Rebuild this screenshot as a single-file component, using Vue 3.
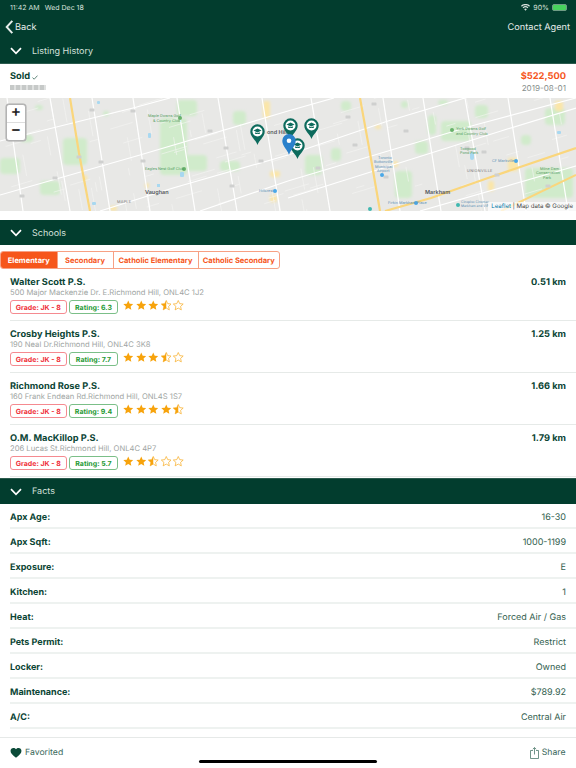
<script setup>
const schools = [
  { name: 'Walter Scott P.S.', addr: '500 Major Mackenzie Dr. E.Richmond Hill, ONL4C 1J2', rating: '6.3', km: '0.51 km', stars: 3.5 },
  { name: 'Crosby Heights P.S.', addr: '190 Neal Dr.Richmond Hill, ONL4C 3K8', rating: '7.7', km: '1.25 km', stars: 3.5 },
  { name: 'Richmond Rose P.S.', addr: '160 Frank Endean Rd.Richmond Hill, ONL4S 1S7', rating: '9.4', km: '1.66 km', stars: 4.5 },
  { name: 'O.M. MacKillop P.S.', addr: '206 Lucas St.Richmond Hill, ONL4C 4P7', rating: '5.7', km: '1.79 km', stars: 2.5 }
]
const facts = [
  ['Apx Age:', '16-30'], ['Apx Sqft:', '1000-1199'], ['Exposure:', 'E'], ['Kitchen:', '1'],
  ['Heat:', 'Forced Air / Gas'], ['Pets Permit:', 'Restrict'], ['Locker:', 'Owned'],
  ['Maintenance:', '$789.92'], ['A/C:', 'Central Air']
]
const tabs = ['Elementary', 'Secondary', 'Catholic Elementary', 'Catholic Secondary']
const starPath = 'M6.5 .6 8.3 4.5 12.6 5 9.4 7.9 10.3 12.2 6.5 10 2.7 12.2 3.6 7.9 .4 5 4.7 4.5Z'
const kind = (s, i) => (s >= i ? 'full' : s >= i - 0.5 ? 'half' : 'empty')

const roads = [
  [7, 0, 23, 113], [50, 0, 70, 113], [92, 0, 110, 113], [133, 0, 150, 113], [177, 0, 195, 113],
  [218, 0, 237, 113], [262, 0, 280, 113], [311, 0, 330, 113], [383, 0, 400, 113], [423, 0, 441, 113],
  [465, 0, 485, 113], [508, 0, 526, 113], [550, 0, 568, 113],
  [0, 97, 140, 57], [140, 57, 288, 13], [288, 13, 334, 0], [0, 43, 133, 10], [133, 10, 170, 0],
  [173, 90, 288, 57], [288, 57, 388, 23], [388, 23, 465, 0], [288, 100, 501, 33], [501, 33, 576, 10],
  [200, 113, 288, 83], [288, 83, 388, 53], [388, 53, 475, 27], [475, 27, 576, 0], [420, 113, 576, 68], [100, 113, 173, 90]
]
// thin residential streets, laid out with a small fixed pseudo-random sequence
const minor = []
let seed = 17
const rnd = () => ((seed = (seed * 137 + 71) % 1009) / 1009)
for (let i = 0; i < 120; i++) {
  const x = rnd() * 576, y = rnd() * 113, l = 6 + rnd() * 20
  if (rnd() > 0.5) minor.push([x, y, x + l, y - l * 0.3])
  else minor.push([x, y, x + l * 0.18, y + l])
}
const parks = [
  [35, 7, 8, 5], [103, 13, 6, 5], [160, 20, 27, 57], [177, 2, 20, 16], [185, 57, 22, 16], [63, 40, 24, 27],
  [0, 60, 20, 16], [40, 83, 20, 14], [20, 37, 13, 7], [220, 63, 20, 10], [233, 13, 13, 14], [341, 3, 10, 10],
  [401, 3, 7, 7], [428, 17, 8, 20], [441, 23, 30, 20], [475, 7, 13, 13], [521, 37, 10, 10], [525, 70, 48, 30],
  [395, 73, 17, 27], [331, 50, 10, 13], [305, 57, 17, 20], [415, 43, 13, 13], [545, 10, 20, 17], [438, 2, 10, 5]
]
const cream = [
  [263, 3, 7, 17], [270, 73, 10, 6], [270, 97, 7, 7], [83, 77, 4, 6], [145, 85, 4, 5], [110, 108, 7, 5],
  [393, 63, 5, 6], [488, 83, 6, 10], [508, 60, 10, 13], [555, 3, 8, 10], [375, 27, 6, 4]
]
const shields = [[92, 12], [133, 13], [79, 59], [143, 63], [101, 64], [55, 80], [22, 98], [210, 33], [226, 50], [261, 63], [232, 88], [374, 6], [406, 33], [348, 19], [386, 79], [355, 47], [467, 50], [484, 54], [497, 77], [318, 70], [548, 88]]
const pins = [[250, 26], [283, 20], [304, 20], [290, 40]]
const dots = [
  [180, 20, 'g'], [184, 71, 'g'], [452, 32, 'g'], [275, 93, 'b'], [382, 77, 'b'],
  [516, 63, 'b'], [416, 105, 'b'], [458, 107, 't'], [370, 111, 't']
]
const labels = [
  { t: 'Maple Downs Golf', x: 148, y: 16, c: 'green' }, { t: '& Country Club', x: 153, y: 21, c: 'green' },
  { t: 'Eagles Nest Golf Club', x: 145, y: 69, c: 'green' }, { t: 'Vaughan', x: 145, y: 92, c: 'city' },
  { t: 'MAPLE', x: 117, y: 102, c: 'sm' }, { t: 'Hillcrest', x: 259, y: 91, c: 'blue' },
  { t: 'York Downs Golf', x: 456, y: 29, c: 'green' }, { t: 'and Country Club', x: 456, y: 33.500, c: 'green' },
  { t: 'Toogood', x: 460, y: 48.500, c: 'green' }, { t: 'Pond Park', x: 460, y: 53, c: 'green' },
  { t: 'UNIONVILLE', x: 467, y: 71, c: 'sm' }, { t: 'CF Markville', x: 492, y: 61, c: 'blue' },
  { t: 'Milne Dam', x: 540, y: 68.500, c: 'green' }, { t: 'Conservation', x: 536, y: 73, c: 'green' }, { t: 'Park', x: 543, y: 77.500, c: 'green' },
  { t: 'Toronto', x: 378, y: 57.500, c: 'blue' }, { t: 'Buttonville', x: 374, y: 62, c: 'blue' },
  { t: 'Municipal', x: 375, y: 66.500, c: 'blue' }, { t: 'Airport', x: 377, y: 71, c: 'blue' },
  { t: 'Markham', x: 425, y: 92, c: 'city' }, { t: 'Firkin Markham Place', x: 388, y: 103, c: 'blue' },
  { t: 'Cineplex Cinemas', x: 461, y: 101.500, c: 'blue tiny' }, { t: 'Markham and VIP', x: 461, y: 106, c: 'blue tiny' },
  { t: 'ond Hill', x: 267, y: 32, c: 'city' }
]
</script>

<template>
  <div class="page">
    <header class="topbar">
      <div class="status">
        <span class="status-left"><span>11:42 AM</span><span>Wed Dec 18</span></span>
        <span class="status-right">
          <svg width="9" height="7" viewBox="0 0 13 10"><path d="M6.500 9.600 4.600 7.400a2.800 2.800 0 0 1 3.800 0ZM3.500 6.200 2.300 4.900a6 6 0 0 1 8.400 0L9.500 6.200a4.400 4.400 0 0 0-6 0ZM1.200 3.800 0 2.500a9.200 9.200 0 0 1 13 0l-1.200 1.300a7.600 7.600 0 0 0-10.600 0Z" fill="#d7e0dc"/></svg>
          <span>90%</span>
          <span class="battery"></span>
        </span>
      </div>
      <div class="nav">
        <span class="back">
          <svg width="9" height="14" viewBox="0 0 9 15"><path d="M7.500 1 1.500 7.500l6 6.500" fill="none" stroke="#e6ecea" stroke-width="2.100"/></svg>
          Back
        </span>
        <span>Contact Agent</span>
      </div>
      <div class="sect sect-first">
        <svg class="chev" width="12" height="8" viewBox="0 0 12 8"><path d="M1 1.200 6 6.300l5-5.100" fill="none" stroke="#fff" stroke-width="1.700"/></svg>
        <span>Listing History</span>
      </div>
    </header>

    <section class="sold">
      <div>
        <div class="sold-title">Sold <svg width="6" height="5" viewBox="0 0 6 5"><path d="M.5 2.600 2.200 4.200 5.500.6" fill="none" stroke="#3c6a5c" stroke-width=".8"/></svg></div>
        <div class="redacted"></div>
      </div>
      <div class="sold-right">
        <div class="price">$522,500</div>
        <div class="date">2019-08-01</div>
      </div>
    </section>

    <section class="map">
      <svg class="map-svg" width="576" height="113" viewBox="0 0 576 113">
        <defs><filter id="soft"><feGaussianBlur stdDeviation="1.800"/></filter></defs>
        <rect width="576" height="113" fill="#e8e8e6"/>
        <g filter="url(#soft)">
          <rect v-for="(p, i) in parks" :key="'p' + i" :x="p[0]" :y="p[1]" :width="p[2]" :height="p[3]" rx="4" fill="#d0ebcb"/>
          <rect v-for="(p, i) in cream" :key="'c' + i" :x="p[0]" :y="p[1]" :width="p[2]" :height="p[3]" rx="2" fill="#fbe6a8"/>
        </g>
        <g stroke="#f5f5f4" stroke-width=".6" fill="none">
          <line v-for="(r, i) in minor" :key="'m' + i" :x1="r[0]" :y1="r[1]" :x2="r[2]" :y2="r[3]"/>
        </g>
        <g stroke="#fff" stroke-width="1.200" fill="none">
          <line v-for="(r, i) in roads" :key="'r' + i" :x1="r[0]" :y1="r[1]" :x2="r[2]" :y2="r[3]"/>
        </g>
        <g stroke="#fad67c" stroke-width="2.200" fill="none">
          <path d="M70 0 79 55 90 113"/>
          <path d="M360 0 370 55 380 113"/>
          <path d="M385 113 431 100 488 80 576 50"/>
          <path d="M501 113 576 77" stroke-width="2"/>
        </g>
        <rect v-for="(s, i) in shields" :key="'s' + i" :x="s[0] - 2.500" :y="s[1] - 1.500" width="5" height="3" rx=".6" fill="#cfd0cf"/>
        <g fill="#a8d8f0">
          <rect x="97" y="3" width="3" height="3" rx="1"/><rect x="148" y="35" width="3" height="5" rx="1"/>
          <rect x="180" y="74" width="4" height="5" rx="1"/><rect x="92" y="104" width="4" height="3" rx="1"/>
          <rect x="470" y="54" width="4" height="8" rx="2"/><rect x="557" y="33" width="4" height="3" rx="1"/>
          <rect x="157" y="86" width="3" height="3"/>
        </g>
        <circle v-for="(d, i) in dots" :key="'d' + i" :cx="d[0]" :cy="d[1]" r="2" :fill="d[2] === 'g' ? '#68b26a' : d[2] === 'b' ? '#4aa8e8' : '#3fb8b0'"/>
      </svg>
      <span v-for="l in labels" :key="l.t" class="mlabel" :class="l.c" :style="{ left: l.x + 'px', top: l.y + 'px' }">{{ l.t }}</span>

      <svg v-for="(p, i) in pins" :key="'pin' + i" class="pin" :style="{ left: p[0] + 'px', top: p[1] + 'px' }" width="15" height="21" viewBox="0 0 15 21">
        <path d="M7.500 21C6 16 .3 13 .3 7.500a7.200 7.200 0 0 1 14.400 0C14.700 13 9 16 7.500 21Z" fill="#0d6b5d"/>
        <circle cx="7.500" cy="7.500" r="5" fill="#fff"/>
        <path d="M7.500 4.600 11.500 6.600 7.500 8.600 3.500 6.600ZM5.200 8.200 7.500 9.300 9.800 8.200V10H5.200Z" fill="#0d6b5d"/>
      </svg>
      <svg class="pin" style="left:282px;top:36px" width="14" height="21" viewBox="0 0 14 21">
        <path d="M7 21C5.500 15.500.3 12.500.3 6.800a6.700 6.700 0 0 1 13.400 0C13.700 12.500 8.500 15.500 7 21Z" fill="#2a81cb"/>
        <circle cx="7" cy="6.800" r="2.300" fill="#fff"/>
      </svg>

      <div class="zoom">
        <div class="zoom-btn">+</div>
        <div class="zoom-btn">−</div>
      </div>
      <div class="attrib"><span class="leaflet">Leaflet</span> | Map data © Google</div>
    </section>

    <div class="sect sect-bar schools-bar">
      <svg class="chev" width="12" height="8" viewBox="0 0 12 8"><path d="M1 1.200 6 6.300l5-5.100" fill="none" stroke="#fff" stroke-width="1.700"/></svg>
      <span>Schools</span>
    </div>

    <div class="tabs">
      <span v-for="(t, i) in tabs" :key="t" class="tab" :class="{ active: i === 0 }">{{ t }}</span>
    </div>

    <div class="school" v-for="s in schools" :key="s.name">
      <div class="school-top">
        <span class="school-name">{{ s.name }}</span>
        <span class="km">{{ s.km }}</span>
      </div>
      <div class="addr">{{ s.addr }}</div>
      <div class="badges">
        <span class="badge red">Grade: JK - 8</span>
        <span class="badge green">Rating: {{ s.rating }}</span>
        <span class="stars">
          <svg v-for="i in 5" :key="i" width="10.500" height="10.500" viewBox="0 0 13 13">
            <path v-if="kind(s.stars, i) === 'full'" :d="starPath" fill="#f7a30c"/>
            <template v-else>
              <path :d="starPath" fill="none" stroke="#f7a30c" stroke-width=".8"/>
              <path v-if="kind(s.stars, i) === 'half'" d="M6.500 .6V10L2.700 12.200 3.600 7.900 .4 5 4.700 4.500Z" fill="#f7a30c"/>
            </template>
          </svg>
        </span>
      </div>
    </div>

    <div class="sect sect-bar facts-bar">
      <svg class="chev" width="12" height="8" viewBox="0 0 12 8"><path d="M1 1.200 6 6.300l5-5.100" fill="none" stroke="#fff" stroke-width="1.700"/></svg>
      <span>Facts</span>
    </div>

    <div class="fact" v-for="f in facts" :key="f[0]">
      <span class="fact-key">{{ f[0] }}</span>
      <span class="fact-val">{{ f[1] }}</span>
    </div>

    <footer class="footer">
      <span class="foot-item">
        <svg width="12" height="10" viewBox="0 0 12 11"><path d="M6 10.800C2.500 8 0 6 0 3.300 0 1.400 1.400 0 3.200 0 4.300 0 5.400.6 6 1.500 6.600.6 7.700 0 8.800 0 10.600 0 12 1.400 12 3.300 12 6 9.500 8 6 10.800Z" fill="#0b4a38"/></svg>
        Favorited
      </span>
      <span class="foot-item">
        <svg width="9" height="12" viewBox="0 0 9 12"><path d="M3 3.500H.5v8h8v-8H6M4.500 7.500V.7M2.800 2.200 4.500.6l1.700 1.600" fill="none" stroke="#4d7a6c" stroke-width=".8"/></svg>
        Share
      </span>
      <div class="home"></div>
    </footer>
  </div>
</template>

<style scoped>
.page { width: 576px; height: 768px; overflow: hidden; position: relative; background: #fff; font-family: Inter, "Liberation Sans", sans-serif; color: #0b4535; text-rendering: geometricPrecision; }
.topbar { background: #023d2e; height: 64px; color: #e6ecea; border-bottom: 1px solid #2c5b4e; box-sizing: border-box; }
.status { height: 15px; display: flex; justify-content: space-between; align-items: center; padding: 0 9px 0 10px; font-size: 7px; color: #d7e0dc; }
.status-left { display: flex; gap: 5px; }
.status-right { display: flex; align-items: center; gap: 3px; }
.battery { width: 13px; height: 5px; background: #47d35d; border: 1px solid #6f9c85; border-radius: 2px; display: block; }
.nav { height: 24px; display: flex; justify-content: space-between; align-items: center; padding: 0 6px 0 5px; font-size: 9.200px; }
.back { display: flex; align-items: center; gap: 1px; }
.sect { display: flex; align-items: center; font-size: 9px; color: #d5e0dc; box-sizing: border-box; }
.sect-first { height: 24px; padding-left: 10px; }
.chev { margin-right: 10px; }
.sect-bar { background: #023d2e; height: 25px; padding: 1px 0 0 10px; }
.sold { height: 34px; display: flex; justify-content: space-between; padding: 7px 10px 0 10px; box-sizing: border-box; }
.sold-title { font-size: 9.300px; font-weight: 700; line-height: 12px; display: flex; gap: 2px; align-items: center; }
.redacted { width: 36px; height: 5px; margin-top: 2px; background: repeating-linear-gradient(90deg, #c6c9c8 0 4px, #dfe1e0 4px 6px); filter: blur(.7px); }
.sold-right { text-align: right; }
.price { font-size: 9.300px; font-weight: 700; color: #f6561b; line-height: 12px; }
.date { font-size: 8.100px; color: #868e8b; line-height: 10px; }
.map { height: 113px; position: relative; overflow: hidden; margin-bottom: 9px; }
.map-svg { display: block; }
.pin { position: absolute; }
.mlabel { position: absolute; font-size: 3.800px; line-height: 4px; white-space: nowrap; }
.mlabel.green { color: #4f9a5c; }
.mlabel.blue { color: #5a8fb5; }
.mlabel.tiny { font-size: 3.300px; }
.mlabel.city { color: #55595c; font-size: 5.500px; line-height: 6px; font-weight: 600; }
.mlabel.sm { color: #777; letter-spacing: .3px; }
.zoom { position: absolute; left: 6px; top: 6px; width: 18px; border: 1px solid #b3b3b3; border-radius: 3px; background: #fff; overflow: hidden; box-shadow: 0 0 0 .5px #aaa; }
.zoom-btn { height: 17px; font: 700 15px/16px "Liberation Sans", sans-serif; color: #222; text-align: center; border-bottom: 1px solid #ddd; }
.zoom-btn:last-child { border-bottom: 0; }
.attrib { position: absolute; right: 0; bottom: 0; height: 9px; padding: 0 3px; font-size: 6.100px; line-height: 9px; color: #444; background: rgba(255,255,255,.7); }
.leaflet { color: #0078a8; }
.tabs { display: grid; grid-template-columns: 55.500px 56px 85px 81.500px; margin-top: 6px; height: 18px; width: 280px; box-sizing: border-box; border: 1px solid #f7a083; border-radius: 3px; overflow: hidden; }
.tab { font-size: 7.500px; font-weight: 700; color: #f6561b; display: flex; align-items: center; justify-content: center; border-left: 1px solid #f7a083; white-space: nowrap; }
.tab:first-child { border-left: 0; }
.tab.active { background: #f6561b; color: #fff; }
.school { height: 52px; margin-left: 10px; padding: 7px 10px 0 0; box-sizing: border-box; border-bottom: 1px solid #e6eae8; }
.school-top { display: flex; justify-content: space-between; align-items: center; height: 12px; }
.school-name { font-size: 9.250px; font-weight: 700; }
.km { font-size: 9.250px; font-weight: 700; }
.addr { font-size: 7.650px; color: #a0a5a3; line-height: 10.500px; }
.badges { display: flex; align-items: center; gap: 2.500px; margin-top: 1.500px; }
.badge { font-size: 7px; font-weight: 700; height: 14px; box-sizing: border-box; border-radius: 3px; display: flex; align-items: center; justify-content: center; }
.badge.red { color: #ef2f3a; border: 1px solid #f58a90; width: 56.500px; }
.badge.green { color: #1f9a34; border: 1px solid #7bbf88; width: 49px; }
.stars { display: flex; gap: 2px; margin-left: 2.500px; margin-top: -2.600px; }
.facts-bar { height: 26px; margin-top: 1px; box-shadow: inset 0 1px 0 #2c5b4e; }
.fact { height: 25px; margin-left: 10px; padding: 3px 10px 0 0; display: flex; justify-content: space-between; align-items: center; box-sizing: border-box; border-bottom: 2px solid #eef2f0; font-size: 9px; }
.fact-key { font-weight: 700; }
.fact-val { color: #33614f; }
.footer { position: absolute; left: 0; right: 0; bottom: 0; height: 31px; box-sizing: border-box; border-top: 1px solid #e6e9e8; background: #fff; display: flex; justify-content: space-between; padding: 9px 10.500px 0 10px; }
.foot-item { display: flex; align-items: center; gap: 3px; font-size: 8.700px; color: #3c6a5c; height: 12px; }
.home { position: absolute; left: 199px; bottom: 5px; width: 178px; height: 3px; border-radius: 2px; background: #000; }
</style>
